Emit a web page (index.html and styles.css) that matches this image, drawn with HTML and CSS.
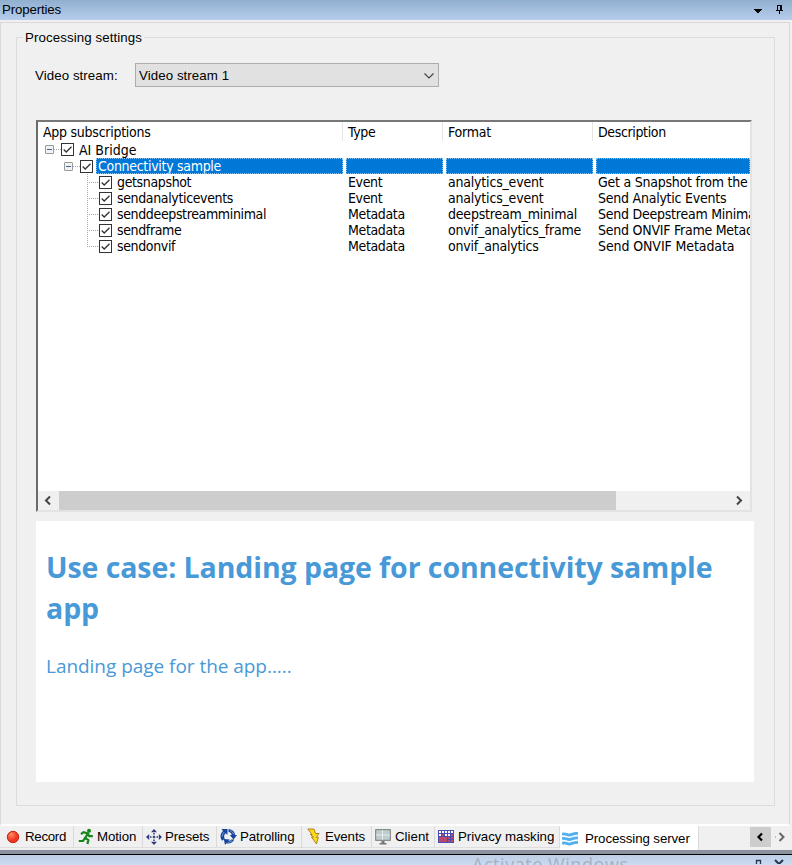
FILE: index.html
```html
<!DOCTYPE html>
<html lang="en">
<head>
<meta charset="utf-8">
<title>Properties</title>
<link rel="stylesheet" href="styles.css">
</head>
<body>
<header class="titlebar">
  <span class="title">Properties</span>
  <svg class="title-icons" width="32" height="20" viewBox="0 0 32 20" shape-rendering="crispEdges">
    <path d="M0 9h8v1h-1v1h-1v1h-1v1h-2v-1h-1v-1h-1v-1h-1z" fill="#000"/>
    <path d="M23 5h5v5h1v1h-3v3h-1v-3h-3v-1h1zM24 6v4h2v-4z" fill="#000" fill-rule="evenodd"/>
  </svg>
</header>
<main class="page">
  <fieldset class="group">
    <legend>Processing settings</legend>
    <div class="stream">
      <label>Video stream:</label>
      <div class="combo"><span>Video stream 1</span>
        <svg width="10" height="6" viewBox="0 0 10 6"><path d="M.5.5 5 5 9.5.5" fill="none" stroke="#444" stroke-width="1.2"/></svg>
      </div>
    </div>
    <section class="tree">
      <div class="row head"><span class="c1">App subscriptions</span><span>Type</span><span class="c3">Format</span><span>Description</span></div>
      <div class="row root">
        <span class="c1 node"><i class="minus"></i><i class="dots"></i><svg class="check"><use href="#ck"/></svg><b>AI Bridge</b></span><span></span><span class="c3"></span><span></span>
      </div>
      <div class="row selected">
        <span class="c1 node"><i class="minus"></i><i class="dots"></i><svg class="check"><use href="#ck"/></svg><b>Connectivity sample</b></span><span></span><span class="c3"></span><span></span>
      </div>
      <div class="row leaf"><span class="c1 node"><i class="branch"></i><svg class="check"><use href="#ck"/></svg><b>getsnapshot</b></span><span>Event</span><span class="c3">analytics_event</span><span>Get a Snapshot from the</span></div>
      <div class="row leaf"><span class="c1 node"><i class="branch"></i><svg class="check"><use href="#ck"/></svg><b>sendanalyticevents</b></span><span>Event</span><span class="c3">analytics_event</span><span>Send Analytic Events</span></div>
      <div class="row leaf"><span class="c1 node"><i class="branch"></i><svg class="check"><use href="#ck"/></svg><b>senddeepstreamminimal</b></span><span>Metadata</span><span class="c3">deepstream_minimal</span><span>Send Deepstream Minima</span></div>
      <div class="row leaf"><span class="c1 node"><i class="branch"></i><svg class="check"><use href="#ck"/></svg><b>sendframe</b></span><span>Metadata</span><span class="c3">onvif_analytics_frame</span><span>Send ONVIF Frame Metad</span></div>
      <div class="row leaf last"><span class="c1 node"><i class="branch"></i><svg class="check"><use href="#ck"/></svg><b>sendonvif</b></span><span>Metadata</span><span class="c3">onvif_analytics</span><span>Send ONVIF Metadata</span></div>
      <div class="scrollbar">
        <svg width="21" height="19" viewBox="0 0 21 19"><path d="M12 5.500 8 9.500l4 4" fill="none" stroke="#444" stroke-width="2"/></svg>
        <div class="thumb"></div>
        <svg width="21" height="19" viewBox="0 0 21 19"><path d="M8 5.500l4 4-4 4" fill="none" stroke="#444" stroke-width="2"/></svg>
      </div>
    </section>
    <article class="landing">
      <h1>Use case: Landing page for connectivity sample app</h1>
      <p>Landing page for the app.....</p>
    </article>
  </fieldset>
</main>
<nav class="tabs">
  <div class="tab record"><svg width="14" height="14" viewBox="0 0 14 14"><circle cx="7" cy="7" r="5.700" fill="url(#red)" stroke="#c62312"/></svg><span>Record</span></div>
  <div class="tab motion"><svg width="16" height="17" viewBox="0 0 16 17"><circle cx="11" cy="2.700" r="2" fill="#16851c"/><path d="M3 6.200 5.500 4.200l4.500 1.300L7.200 9.800l3.200 2.300-1 3.900M9.300 5.500l2 2.600h3.500M7 10.200 5 13H.8" fill="none" stroke="#16851c" stroke-width="2.200"/></svg><span>Motion</span></div>
  <div class="tab presets"><svg width="16" height="16" viewBox="0 0 16 16"><path d="M8 0l3 3.200H5zM8 16l3-3.200H5zM0 8l3.200-3v6zM16 8l-3.200-3v6z" fill="#2b3a78"/><path d="M8 4v8M4 8h8" stroke="#2b3a78" stroke-width="1.500" stroke-dasharray="1.500 1.250 2.500 1.250"/></svg><span>Presets</span></div>
  <div class="tab patrol"><svg width="17" height="17" viewBox="0 0 17 17"><path d="M1.500 1h6v6L5.700 5.300C4 6.800 3.700 9 4.700 10.700L2.200 12.800C-.3 9.500 0 5.700 3 3z" fill="#17439a"/><path d="M8.500 1.200c4 0 6.300 2.500 6.600 5.800H17l-3.500 4.500L9.800 7h2c-.4-1.800-1.700-2.800-3.300-2.900z" fill="#17439a"/><path d="M14.300 11.500c-1.800 3.500-4.800 4.600-8 3.800L5 17 3.800 11l6 .5-1.500 1.400c1.200 0 2.200-.4 3-1.400z" fill="#17439a"/><path d="M2.300 8.500c0-2 .7-3.300 2-4.500M10 2.600c1.800.5 3 1.600 3.500 3.600M7.500 14.300c1.800.1 3.200-.5 4.500-1.800" fill="none" stroke="#6fa0dd"/></svg><span>Patrolling</span></div>
  <div class="tab events"><svg width="13" height="17" viewBox="0 0 13 17"><path d="M.8 1H7l1.500 4.500H12L9.300 9.300h2L9.500 16 4.500 9h2L3.300 6.500H5z" fill="#ffdb16" stroke="#a27b20" stroke-width=".9"/></svg><span>Events</span></div>
  <div class="tab client"><svg width="16" height="16" viewBox="0 0 16 16"><rect x=".7" y=".7" width="14.600" height="10.600" fill="#bfcccf" stroke="#777"/><path d="M7.500 1v10M1 6h14" stroke="#e4eaea"/><path d="M6.500 12h3v2h2v1.500h-7V14h2z" fill="#777"/></svg><span>Client</span></div>
  <div class="tab privacy"><svg width="16" height="13" viewBox="0 0 16 13" shape-rendering="crispEdges"><path d="M0 0h16v13H0z" fill="#fff"/><path d="M0 6h3V3h3v3h7V3h3v10H0z" fill="#b84a68"/><path d="M.5 0v13M3.500 0v7M6.500 0v7M9.500 0v13M12.500 0v13M15.500 0v13M0 .5h16M0 3.500h16M0 6.500h16M9 9.500h7M0 12.500h16" stroke="#4b4bb4"/></svg><span>Privacy masking</span></div>
  <div class="tab active"><svg width="16" height="14" viewBox="0 0 16 14"><path d="M0 2.500c3-2 5 1 8 .5s4-2 8-1.500M0 7c3-2 5 1 8 .5s4-2 8-1.500M0 11.500c3-2 5 1 8 .5s4-2 8-1.500" fill="none" stroke="#51b1f0" stroke-width="2.900"/></svg><span>Processing server</span></div>
  <div class="tab-scroll">
    <svg class="prev" width="21" height="20" viewBox="0 0 21 20"><path d="M12 6.500 8.500 10l3.500 3.500" fill="none" stroke="#000" stroke-width="2.200"/></svg>
    <svg class="next" width="21" height="20" viewBox="0 0 21 20"><path d="M8.500 6l4 4-4 4" fill="none" stroke="#666" stroke-width="2"/><path d="M4 10h1" stroke="#888"/></svg>
  </div>
</nav>
<footer class="next-panel">
  <span>Activate Windows</span>
  <svg width="30" height="10" viewBox="0 0 30 10"><path d="M1.500 10V6.500h4V10" fill="none" stroke="#26354d" stroke-width="1.300"/><path d="M20 6l8 8M28 6l-8 8" stroke="#26354d" stroke-width="2"/></svg>
</footer>
<svg class="defs" width="0" height="0">
  <defs>
    <radialGradient id="red" cx=".35" cy=".3"><stop offset="0" stop-color="#ff8b65"/><stop offset="1" stop-color="#ef371f"/></radialGradient>
    <symbol id="ck" viewBox="0 0 13 13"><rect x=".5" y=".5" width="12" height="12" fill="#fff" stroke="#333"/><path d="M2.700 6.500 5.200 9l5.300-5.300" fill="none" stroke="#333" stroke-width="1.300"/></symbol>
  </defs>
</svg>
</body>
</html>
```
FILE: styles.css
```css
* { box-sizing: border-box; }
body { margin: 0; width: 792px; height: 865px; overflow: hidden; background: #f0f0f0; color: #000; font: 13.3px/16px "Liberation Sans", Arial, sans-serif; display: flex; flex-direction: column; }
svg { display: block; flex: none; }
.defs { position: absolute; }
.titlebar { height: 20px; flex: none; display: flex; justify-content: space-between; padding: 0 6px 0 2px; background: linear-gradient(#90afcf, #b7cdec); }
.title { line-height: 19px; letter-spacing: -.17px; }
.page { flex: none; height: 804px; margin: 2px 2px 0 0; padding: 7px 14px 0 15px; border: 1px solid #d9d9d9; border-bottom: 2px solid #fff; }
.group { height: 776px; margin: 0; border: 1px solid #dcdcdc; padding: 18px 20px 0 19px; min-width: 0; }
.group legend { padding: 0 2px; margin-left: -13px; height: 15px; line-height: 15px; letter-spacing: .09px; }
.stream { display: flex; align-items: center; height: 24px; margin-left: -1px; letter-spacing: .07px; }
.stream label { width: 100px; padding-top: 1px; }
.combo { width: 304px; height: 24px; border: 1px solid #adadad; background: #e1e1e1; display: flex; align-items: center; justify-content: space-between; padding: 1px 4px 0 3px; }
.tree { width: 716px; height: 392px; margin-top: 33px; border: 2px solid #6b6b6b; border-top-color: #777; border-right: 2px solid #e3e3e3; border-bottom: 2px solid #e3e3e3; background: #fff; display: flex; flex-direction: column; font: 14px/16px "DejaVu Sans Condensed", "DejaVu Sans", sans-serif; letter-spacing: -.36px; overflow: hidden; }
.row { display: grid; grid-template-columns: 305px 100px 150px 157px; height: 16px; flex: none; white-space: nowrap; }
.row > span { padding-left: 5px; overflow: hidden; }
.row > .c3 { letter-spacing: -.2px; }
.head { height: 19px; line-height: 20px; }
.head > span + span { margin-left: -1px; border-left: 1px solid #e5e5e5; }
.head > .c1 { width: 304px; letter-spacing: -.26px; }
.row b { font-weight: normal; }
.node { display: flex; align-items: center; }
.root { height: 17px; }
.root .node { padding-left: 7px; }
.root b { margin-left: 5px; letter-spacing: 0; }
.minus { width: 9px; height: 9px; border: 1px solid #999; border-radius: 1px; background: linear-gradient(#45609a, #45609a) center / 5px 1px no-repeat #f2f2f2; }
.dots { width: 7px; height: 1px; background: repeating-linear-gradient(90deg, #aaa 0 1px, transparent 1px 2px); }
.check { width: 13px; height: 13px; }
.selected .node { padding-left: 26px; letter-spacing: -.3px; }
.selected b { flex: 1; margin-left: 3px; padding-left: 2px; }
.selected b, .selected > span:not(.node) { height: 16px; color: #fff; background: #0078d7; outline: 1px dotted #8bc5f4; outline-offset: -1px; }
.selected > span:not(.node) { margin-left: 3px; }
.leaf .node { padding-left: 49px; }
.leaf b { margin-left: 5px; }
.leaf > span:last-child { letter-spacing: -.24px; }
.last > span:last-child { letter-spacing: -.1px; }
.branch { width: 12px; height: 16px; background: repeating-linear-gradient(#aaa 0 1px, transparent 1px 2px) left / 1px 100% no-repeat, repeating-linear-gradient(90deg, #aaa 0 1px, transparent 1px 2px) left 8px / 12px 1px no-repeat; }
.last .branch { background-size: 1px 8px, 12px 1px; background-position: left top, left 8px; }
.scrollbar { margin-top: auto; height: 19px; display: flex; flex: none; background: #f0f0f0; }
.thumb { width: 557px; background: #cdcdcd; margin-right: 113px; }
.landing { width: 718px; height: 261px; margin-top: 9px; background: #fff; color: #4899d7; padding: 26px 10px; font-family: "Open Sans", "Noto Sans", sans-serif; }
.landing h1 { margin: 0; font-size: 28.5px; line-height: 41px; font-weight: 700; letter-spacing: -.08px; }
.landing p { margin: 24px 0 0; font-size: 19px; line-height: 26px; letter-spacing: -.04px; }
.tabs { height: 24px; flex: none; display: flex; background: #f0f0f0; letter-spacing: -.1px; }
.tab { display: flex; align-items: center; height: 22px; border-right: 1px solid #dadada; border-bottom: 1px solid #dedede; white-space: nowrap; }
.record { width: 74px; padding-left: 6px; gap: 5px; letter-spacing: -.3px; }
.motion { width: 69px; padding-left: 4px; gap: 3px; }
.presets { width: 74px; padding-left: 3px; gap: 3px; }
.patrol { width: 85px; padding-left: 3px; gap: 3px; }
.events { width: 70px; padding-left: 5px; gap: 5px; }
.client { width: 63px; padding-left: 3px; gap: 4px; letter-spacing: 0; }
.privacy { width: 125px; padding-left: 3px; gap: 4px; letter-spacing: -.03px; }
.active { width: 139px; height: 24px; background: #fff; border-bottom: 0; padding: 1px 0 0 2px; gap: 7px; }
.tab-scroll { margin-left: auto; padding-top: 1px; display: flex; }
.prev { background: #cdcdcd; }
.next-panel { height: 15px; flex: none; border-top: 4px solid #8a929f; box-shadow: inset 0 1px #000; background: linear-gradient(#bccde3, #cbdcf2); display: flex; justify-content: space-between; padding: 0 7px 0 472px; overflow: hidden; }
.next-panel span { font: 18px/18px "Open Sans", sans-serif; letter-spacing: .55px; color: #a4b1c2; padding-top: 1px; }
```
